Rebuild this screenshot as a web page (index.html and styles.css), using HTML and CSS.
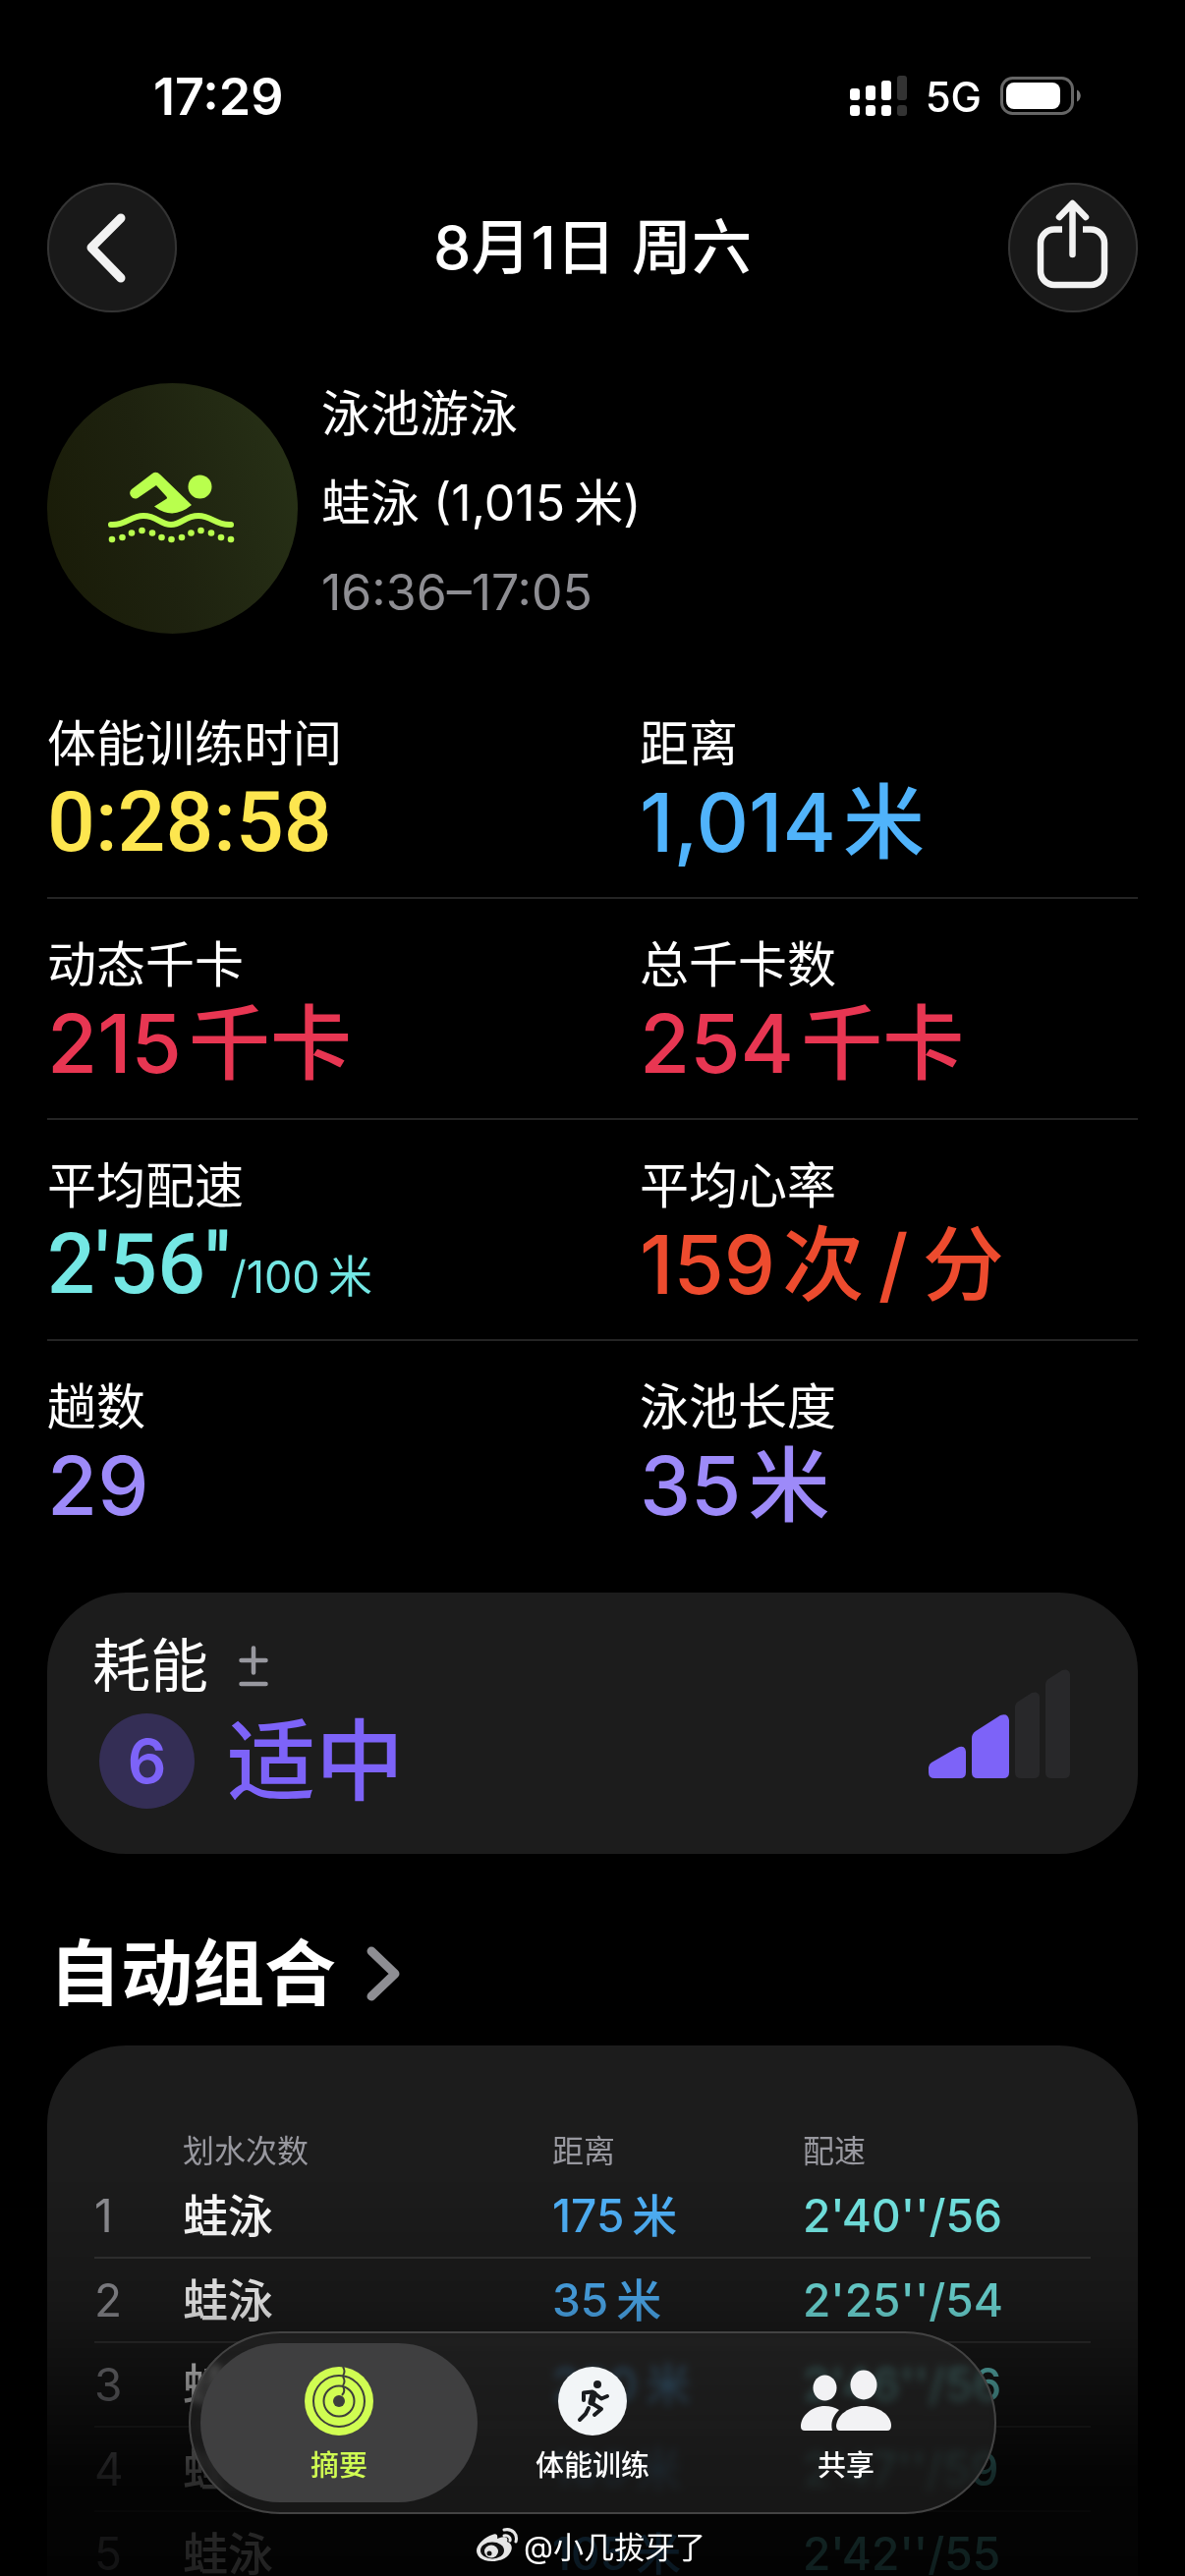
FILE: index.html
```html
<!DOCTYPE html>
<html lang="zh-CN">
<head>
    <meta charset="UTF-8">
    <meta name="viewport" content="width=device-width, initial-scale=1.0">
    <title>体能训练</title>
    <link rel="stylesheet" href="styles.css">
</head>
<body>
    <div class="status-bar">
        <span class="time">17:29</span>
        <div class="status-icons">
            <svg width="58" height="42" viewBox="0 0 58 42" fill="#fff">
                <rect x="0" y="13" width="10" height="12" rx="3"/>
                <rect x="16" y="10" width="10" height="15" rx="3"/>
                <rect x="32" y="5" width="10" height="20" rx="3"/>
                <rect x="48" y="0" width="10" height="25" rx="3" fill="#333"/>
                <rect x="0" y="30" width="10" height="11" rx="3"/>
                <rect x="16" y="30" width="10" height="11" rx="3"/>
                <rect x="32" y="30" width="10" height="11" rx="3"/>
                <rect x="48" y="30" width="10" height="11" rx="3" fill="#333"/>
            </svg>
            <span class="network">5G</span>
            <svg width="82" height="40" viewBox="0 0 82 40">
                <rect x="1.5" y="1.5" width="72" height="36" rx="11" fill="none" stroke="#666" stroke-width="3"/>
                <rect x="6" y="6" width="55" height="27" rx="8" fill="#fff"/>
                <path d="M78 13.500c5 2 5 10 0 12z" fill="#777"/>
            </svg>
        </div>
    </div>

    <header class="nav-bar">
        <button class="round-button" aria-label="返回">
            <svg width="132" height="132" viewBox="0 0 132 132" fill="none" stroke="#f2f2f2" stroke-width="9" stroke-linecap="round" stroke-linejoin="round">
                <path d="M75 36 45 66l30 31"/>
            </svg>
        </button>
        <h1>8月1日 周六</h1>
        <button class="round-button" aria-label="分享">
            <svg width="132" height="132" viewBox="0 0 132 132" fill="none" stroke="#f2f2f2" stroke-width="6.500" stroke-linejoin="round">
                <path d="M55 47.500H47a14 14 0 0 0-14 14V90a14 14 0 0 0 14 14h37a14 14 0 0 0 14-14V61.500a14 14 0 0 0-14-14h-8"/>
                <path d="M65.500 73V22M52 35l13.500-14L79 35" stroke-linecap="round"/>
            </svg>
        </button>
    </header>

    <main>
        <section class="workout">
            <div class="workout-icon">
                <svg width="132" height="76" viewBox="0 0 132 76" fill="#b9ff4d">
                    <path d="M24 18 45 2q4-3 8 1l32 31Q66 50 47 35.500L59 28q2-1 0-3L49 14 30 27a5.500 5.500 0 0 1-6-9z"/>
                    <circle cx="93.500" cy="15.500" r="12"/>
                    <path d="M3 54c16 1 19-9 33-9s17 9 28 9 14-9 28-9 17 10 33 9" fill="none" stroke="#b9ff4d" stroke-width="6" stroke-linecap="round"/>
                    <circle cx="4" cy="69" r="3.300"/><circle cx="14.500" cy="67" r="3.300"/>
                    <circle cx="24" cy="62.500" r="3.300"/><circle cx="34.500" cy="60" r="3.300"/>
                    <circle cx="45" cy="62.500" r="3.300"/><circle cx="54.500" cy="67" r="3.300"/>
                    <circle cx="64.500" cy="69" r="3.300"/><circle cx="75" cy="67" r="3.300"/>
                    <circle cx="84.500" cy="62.500" r="3.300"/><circle cx="94.500" cy="60" r="3.300"/>
                    <circle cx="105" cy="62.500" r="3.300"/><circle cx="115" cy="67" r="3.300"/>
                    <circle cx="125" cy="69" r="3.300"/>
                </svg>
            </div>
            <div class="workout-text">
                <p>泳池游泳</p>
                <p>蛙泳 (1,015&thinsp;米)</p>
                <p class="period">16:36–17:05</p>
            </div>
        </section>

        <section class="metrics">
            <div class="metric-row">
                <div class="metric"><h2>体能训练时间</h2><p class="yellow clock">0:28:58</p></div>
                <div class="metric"><h2>距离</h2><p class="blue">1,014&hairsp;米</p></div>
            </div>
            <div class="metric-row">
                <div class="metric"><h2>动态千卡</h2><p class="red">215&hairsp;千卡</p></div>
                <div class="metric"><h2>总千卡数</h2><p class="red">254&hairsp;千卡</p></div>
            </div>
            <div class="metric-row">
                <div class="metric"><h2>平均配速</h2><p class="cyan clock">2'56''<small>/100&thinsp;米</small></p></div>
                <div class="metric"><h2>平均心率</h2><p class="orange">159&hairsp;次&thinsp;/&thinsp;分</p></div>
            </div>
            <div class="metric-row">
                <div class="metric"><h2>趟数</h2><p class="purple">29</p></div>
                <div class="metric"><h2>泳池长度</h2><p class="purple">35&hairsp;米</p></div>
            </div>
        </section>

        <section class="card effort">
            <div class="effort-text">
                <h2>耗能
                    <svg width="30" height="42" viewBox="0 0 30 42" stroke="#98989f" stroke-width="4.500" stroke-linecap="round">
                        <path d="M2.500 15h25M15 2.500v25M2.500 39h25"/>
                    </svg>
                </h2>
                <div class="effort-level">
                    <span class="badge">6</span>
                    <span class="level">适中</span>
                </div>
            </div>
            <svg width="144" height="111" viewBox="0 0 144 111" fill="#7d63f8">
                <path d="M0 105V100q0-3 3-5L29 80q8-4 9 4v21q0 6-6 6H6q-6 0-6-6z"/>
                <path d="M44 105V70q0-4 4-7L73 47q8-3 9 5v53q0 6-6 6H50q-6 0-6-6z"/>
                <path d="M88 105V38q0-3 3-5l14-9q7-2 8 4v77q0 6-6 6H94q-6 0-6-6z" fill="#28282a"/>
                <path d="M119 105V15q0-3 3-5l14-9q7-2 8 4v100q0 6-6 6h-13q-6 0-6-6z" fill="#28282a"/>
            </svg>
        </section>

        <a class="section-title" href="#sets">自动组合
            <svg width="36" height="58" viewBox="0 0 36 58" fill="none" stroke="#8e8e93" stroke-width="9" stroke-linecap="round" stroke-linejoin="round">
                <path d="M6 6l24 23L6 52"/>
            </svg>
        </a>

        <section class="card sets" id="sets">
            <table>
                <thead>
                    <tr><th class="number"></th><th class="stroke">划水次数</th><th class="distance">距离</th><th>配速</th></tr>
                </thead>
                <tbody>
                    <tr><td>1</td><td>蛙泳</td><td>175&thinsp;米</td><td>2'40''/56</td></tr>
                    <tr><td>2</td><td>蛙泳</td><td>35&thinsp;米</td><td>2'25''/54</td></tr>
                    <tr><td>3</td><td>蛙泳</td><td>280&thinsp;米</td><td>2'46''/56</td></tr>
                    <tr><td>4</td><td>蛙泳</td><td>105&thinsp;米</td><td>2'47''/59</td></tr>
                    <tr><td>5</td><td>蛙泳</td><td>105&thinsp;米</td><td>2'42''/55</td></tr>
                </tbody>
            </table>
        </section>
    </main>

    <div class="bottom">
        <nav class="tab-bar">
            <button class="tab active">
                <svg width="94" height="70" viewBox="0 0 94 70">
                    <circle cx="47" cy="35" r="35" fill="#d0fd52"/>
                    <g fill="none" stroke="#3d3e3c" stroke-width="2">
                        <circle cx="47" cy="35" r="26"/>
                        <circle cx="47" cy="35" r="15.500"/>
                        <path d="M51 0q3 5 0 9M51 10q3 5 0 9M51 20q3 5-1 9"/>
                    </g>
                    <circle cx="47" cy="35" r="6" fill="#3d3e3c"/>
                </svg>
                摘要
            </button>
            <button class="tab">
                <svg width="94" height="70" viewBox="0 0 94 70">
                    <circle cx="47" cy="35" r="35" fill="#f2f5f7"/>
                    <g fill="none" stroke="#1a1c1f" stroke-width="4" stroke-linecap="round" stroke-linejoin="round">
                        <circle cx="52" cy="18" r="4" fill="#1a1c1f" stroke="none"/>
                        <path d="M38 34v-7.500l9-1 9 7 6-2.500"/>
                        <path d="M48 28l-2 9 10 6-7 6"/>
                        <path d="M48 28l-2 8" stroke-width="7"/>
                        <path d="M43 42l-3 6-6 6"/>
                    </g>
                </svg>
                体能训练
            </button>
            <button class="tab">
                <svg width="94" height="70" viewBox="0 0 94 70" fill="#f2f2f4">
                    <ellipse cx="25.500" cy="21.500" rx="12" ry="13"/>
                    <ellipse cx="65" cy="18.500" rx="13.500" ry="15"/>
                    <path d="M5 65q-4 0-4-4C1 50 12 40 25.500 40q8 0 14.500 4c-6 6-9 12-7 21z"/>
                    <path d="M41 65q-4 0-4-5c1-11 13-20 28-20s28 9 28 20q0 5-4 5z"/>
                </svg>
                共享
            </button>
        </nav>
        <p class="watermark">
            <svg width="42" height="36" viewBox="0 0 42 36">
                <path d="M16 7c4-2 6 0 5 4 7-3 12-2 10 3 10 3 4 20-15 20C4 34 0 28 0 23 0 17 9 9 16 7z" fill="#e6e6e6"/>
                <ellipse cx="16" cy="23" rx="12" ry="8.500" fill="#111"/>
                <ellipse cx="15" cy="24" rx="7" ry="6.500" fill="#e6e6e6"/>
                <circle cx="13" cy="26" r="2.500" fill="#111"/>
                <path d="M28 2c9-2 14 5 12 12M28 8c4-1 7 2 6 5" fill="none" stroke="#e6e6e6" stroke-width="3" stroke-linecap="round"/>
            </svg>
            @小几拔牙了
        </p>
    </div>
</body>
</html>
```
FILE: styles.css
```css
* {
    box-sizing: border-box;
}
body {
    margin: 0;
    height: 100vh;
    overflow: hidden;
    background-color: #000;
    color: #fff;
    font-family: Inter, "Noto Sans CJK SC", sans-serif;
}
h1, h2, p {
    margin: 0;
    font-weight: 400;
}
button {
    padding: 0;
    border: none;
    color: inherit;
    font-family: inherit;
    cursor: pointer;
}
svg {
    display: block;
}

/* status bar */
.status-bar {
    display: flex;
    justify-content: space-between;
    align-items: center;
    height: 126px;
    margin-top: 35px;
    padding: 0 106px 0 156px;
}
.time {
    font-size: 52px;
    font-weight: 600;
}
.status-icons {
    display: flex;
    align-items: center;
    gap: 19px;
}
.network {
    font-size: 42px;
    font-weight: 500;
}

/* navigation */
.nav-bar {
    display: flex;
    justify-content: space-between;
    align-items: center;
    margin-top: 25px;
    padding: 0 48px;
}
.nav-bar h1 {
    font-size: 61px;
    font-weight: 500;
    line-height: 80px;
}
.round-button {
    width: 132px;
    height: 132px;
    border-radius: 50%;
    background-color: #191919;
    box-shadow: inset 0 0 0 2px #343434;
}

main {
    padding: 0 48px;
}
.workout {
    display: flex;
    align-items: center;
    gap: 24px;
    height: 255px;
    margin-top: 72px;
}
.workout-icon {
    display: flex;
    align-items: center;
    justify-content: center;
    width: 255px;
    height: 255px;
    border-radius: 50%;
    background: linear-gradient(75deg, #191b07, #1e220f 45%, #283217);
}
.workout-text {
    padding-bottom: 10px;
    font-size: 50px;
    line-height: 91px;
}
.period {
    color: #8e8e93;
}

/* metrics */
.metrics {
    margin-top: 45px;
}
.metric-row {
    display: grid;
    grid-template-columns: 1fr 1fr;
    gap: 96px;
    height: 225px;
    padding-top: 32px;
    border-bottom: 2px solid #242424;
}
.metric-row:last-child {
    border-bottom: none;
}
.metric h2 {
    font-size: 50px;
    line-height: 70px;
}
.metric p {
    font-size: 83px;
    font-weight: 500;
    line-height: 90px;
    white-space: nowrap;
}
/* narrower colons and primes */
.metric .clock {
    font-family: Roboto, "Noto Sans CJK SC", sans-serif;
    font-size: 86px;
}
.metric small {
    font-family: Inter, "Noto Sans CJK SC", sans-serif;
    font-size: 45px;
    font-weight: 400;
}
.yellow { color: #fde64f; }
.blue { color: #50b3fb; }
.red { color: #e83652; }
.cyan { color: #74e7e4; }
.orange { color: #ed4b2e; }
.purple { color: #9d8af9; }

/* cards */
.card {
    border-radius: 80px;
    background-color: #1c1c1c;
}
.effort {
    display: flex;
    justify-content: space-between;
    align-items: center;
    height: 266px;
    margin-top: 31px;
    padding: 0 69px 0 46px;
}
.effort-text {
    display: flex;
    flex-direction: column;
    gap: 8px;
    padding-bottom: 12px;
}
.effort h2 {
    display: flex;
    align-items: center;
    gap: 31px;
    font-size: 59px;
    line-height: 80px;
}
.effort-level {
    display: flex;
    align-items: center;
    gap: 33px;
    padding-left: 7px;
    color: #7d63f8;
}
.badge {
    width: 97px;
    border-radius: 50%;
    background-color: #342e55;
    font-size: 62px;
    font-weight: 600;
    line-height: 97px;
    text-align: center;
}
.level {
    font-size: 90px;
    font-weight: 500;
    line-height: 97px;
}
.section-title {
    display: flex;
    align-items: center;
    gap: 30px;
    margin-top: 72px;
    padding-left: 2px;
    color: #fff;
    font-size: 73px;
    font-weight: 700;
    line-height: 100px;
    text-decoration: none;
}

/* sets table */
.sets {
    margin-top: 23px;
    padding: 80px 48px;
}
.sets table {
    width: 100%;
    border-collapse: collapse;
    table-layout: fixed;
    text-align: left;
}
.sets th, .sets td {
    padding: 0;
    white-space: nowrap;
}
.sets th {
    height: 50px;
    color: #98989f;
    font-size: 32px;
    font-weight: 400;
}
.sets .number {
    width: 90px;
}
.sets .stroke {
    width: 376px;
}
.sets .distance {
    width: 255px;
}
.sets td {
    height: 86px;
    border-bottom: 2px solid #333;
    font-size: 46px;
    font-weight: 500;
    line-height: 60px;
}
.sets td:nth-child(1) {
    color: #8e8e93;
    font-weight: 400;
}
.sets td:nth-child(3) {
    color: #50b3fb;
}
.sets td:nth-child(4) {
    color: #74e7e4;
}

/* tab bar floating over the page, which fades out below it */
.bottom {
    position: fixed;
    right: 0;
    bottom: 0;
    left: 0;
    display: flex;
    flex-direction: column;
    align-items: center;
    padding-top: 153px;
    background: linear-gradient(rgba(0, 0, 0, 0), rgba(0, 0, 0, 0.17) 30%, rgba(0, 0, 0, 0.52) 53%, rgba(0, 0, 0, 0.82) 74%, rgba(0, 0, 0, 0.87));
}
.tab-bar {
    display: flex;
    padding: 12px;
    border-radius: 93px;
    background-color: rgba(30, 30, 30, 0.75);
    box-shadow: inset 0 0 0 2px #434343;
    backdrop-filter: blur(4px) brightness(1.8);
}
.tab {
    display: flex;
    flex-direction: column;
    align-items: center;
    gap: 11px;
    width: 282px;
    height: 162px;
    padding-top: 24px;
    border-radius: 81px;
    background: none;
    font-size: 29px;
    font-weight: 500;
    line-height: 40px;
}
.tab + .tab {
    margin-left: -24px;
}
.tab.active {
    background-color: #3f3f40;
    color: #d0fd52;
}
.watermark {
    display: flex;
    align-items: center;
    gap: 6px;
    height: 63px;
    padding-right: 3px;
    font-size: 31px;
}
```
